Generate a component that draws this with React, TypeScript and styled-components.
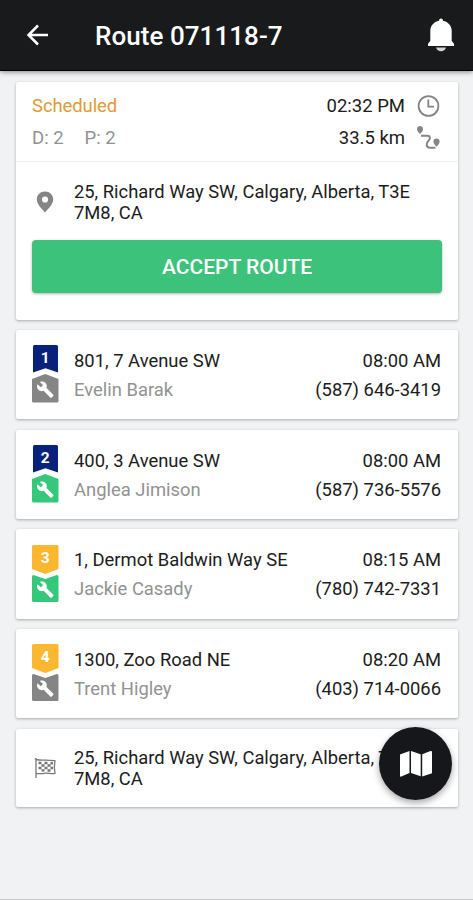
import React from "react";
import styled, { createGlobalStyle } from "styled-components";

const GlobalStyle = createGlobalStyle`
  * { box-sizing: border-box; }
  body {
    margin: 0;
    background: #f1f2f4;
    font-family: Roboto, "Liberation Sans", sans-serif;
    color: #1c1c1c;
  }
`;

const Screen = styled.div`
  display: flex;
  flex-direction: column;
  width: 473px;
  height: 900px;
  background: #f1f2f4;
  border-bottom: 1px solid #c9cacc;
  overflow: hidden;
`;

const Header = styled.header`
  display: flex;
  align-items: center;
  flex: none;
  height: 71px;
  padding: 0 18px 0 26px;
  background: #191a1c;
  border-bottom: 1px solid #000;
  box-shadow: 0 1px 5px rgba(0, 0, 0, 0.45);
  color: #fff;
`;

const Title = styled.h1`
  flex: 1;
  margin: 2px 0 0 46px;
  font-size: 26px;
  font-weight: 500;
  letter-spacing: 0.05px;
  line-height: 32px;
`;

const List = styled.main`
  display: flex;
  flex-direction: column;
  gap: 10.5px;
  padding: 11px 15px 0 16px;
`;

const Card = styled.section`
  background: #fff;
  border-radius: 2px;
  box-shadow: 0 1px 3px rgba(0, 0, 0, 0.3);
`;

const Summary = styled.div`
  display: flex;
  flex-direction: column;
  height: 80px;
  padding: 8px 16px 0;
  border-bottom: 1px solid #f0f0f0;
`;

const SummaryRow = styled.div`
  display: flex;
  align-items: center;
  height: 32px;
  font-size: 18.5px;
`;

const Status = styled.span`
  flex: 1;
  color: #e09a35;
  letter-spacing: -0.1px;
`;

const Counts = styled.span`
  display: flex;
  flex: 1;
  gap: 21px;
  color: #929292;
`;

const SummaryIcon = styled.span`
  display: flex;
  width: 26px;
  margin-left: 11px;
`;

const AddressRow = styled.div<{ $top: number }>`
  display: flex;
  align-items: center;
  padding: ${(p) => p.$top}px 16px 0;
`;

const AddressIcon = styled.span`
  display: flex;
  justify-content: center;
  width: 26px;
  margin-right: 16px;
`;

const Address = styled.p`
  flex: 1;
  margin: 0;
  font-size: 18.35px;
  line-height: 21.2px;
  white-space: nowrap;
`;

const AcceptButton = styled.button`
  display: block;
  width: 410px;
  height: 53px;
  margin: 16.6px 16px 26.5px;
  padding: 1px 0 0;
  border: 0;
  border-radius: 4px;
  background: #3cc27b;
  box-shadow: 0 1px 3px rgba(0, 0, 0, 0.3);
  color: #fff;
  font: 500 21px Roboto, "Liberation Sans", sans-serif;
`;

const StopCard = styled(Card)`
  display: flex;
  height: 89.2px;
  padding: 16px 17px 0 16px;
`;

const StopBadge = styled.span`
  display: flex;
  flex: none;
  width: 27px;
  margin: -0.8px 15px 0 0;
`;

const StopText = styled.div<{ $end?: boolean }>`
  display: flex;
  flex: ${(p) => (p.$end ? "none" : 1)};
  flex-direction: column;
  align-items: ${(p) => (p.$end ? "flex-end" : "flex-start")};
  font-size: 18.4px;
  line-height: 29px;
  white-space: nowrap;
`;

const Muted = styled.span`
  color: #929292;
`;

const FinishCard = styled(Card)`
  height: 78px;
`;

const MapButton = styled.button`
  position: absolute;
  left: 379px;
  top: 727px;
  display: flex;
  align-items: center;
  justify-content: center;
  width: 73px;
  height: 73px;
  padding: 0;
  border: 0;
  border-radius: 50%;
  background: #15171a;
  box-shadow: 0 3px 7px rgba(0, 0, 0, 0.35);
`;

const BackIcon = () => (
  <svg width="23" height="22" viewBox="0 0 23 22" fill="none" stroke="#fff" strokeWidth="2.5">
    <path d="M22 11H2.5M12 1.5L2.5 11l9.5 9.5" />
  </svg>
);

const BellIcon = () => (
  <svg width="28" height="36" viewBox="0 0 28 36" fill="#fff">
    <path d="M14 1.5c1.2 0 1.9.9 1.9 2.2C21.5 4.700 24.700 9 24.700 14v10l2.300 2.800v2.200H1v-2.200L3.300 24V14c0-5 3.200-9.300 8.800-10.300 0-1.300.7-2.200 1.900-2.200z" />
    <path d="M9 30.500h10c-.6 2.200-2.500 3.700-5 3.700s-4.400-1.500-5-3.700z" fill="#d4d4d4" />
  </svg>
);

const ClockIcon = () => (
  <svg width="24" height="24" viewBox="0 0 24 24" fill="none" stroke="#858585" strokeWidth="1.800">
    <circle cx="12.500" cy="12" r="9.900" />
    <path d="M12.300 5.500V12.700H18" />
  </svg>
);

const PathIcon = () => (
  <svg width="26" height="26" viewBox="0 0 26 26" fill="#858585">
    <path d="M4 1C2.200 1 1 2.300 1 4c0 2 1.500 3.400 3 5 1.500-1.600 3-3 3-5 0-1.700-1.200-3-3-3z" />
    <path d="M20.500 13.500c-1.900 0-3.100 1.300-3.100 3.100 0 2.100 1.600 3.600 3.100 5.200 1.600-1.600 3.100-3.100 3.100-5.200 0-1.800-1.200-3.100-3.100-3.100z" />
    <path
      d="M5 10.800h6.200c3.200 0 3.600 2.700 1.500 4.600-3.100 2.700-2.700 7.300 1.300 7.300h5.500"
      fill="none"
      stroke="#858585"
      strokeWidth="2"
    />
  </svg>
);

const PinIcon = () => (
  <svg width="18" height="22" viewBox="0 0 18 22" fill="#858585">
    <path
      fillRule="evenodd"
      d="M9 .5C4.300.5.8 4 .8 8.500c0 5 5 9.300 8.200 13 3.200-3.700 8.200-8 8.200-13C17.200 4 13.700.5 9 .5zm0 4.900a3.100 3.100 0 1 1 0 6.200 3.100 3.100 0 0 1 0-6.200z"
    />
  </svg>
);

const FlagIcon = () => (
  <svg width="22" height="22" viewBox="0 0 22 22" fill="none" stroke="#777" strokeWidth="1.300">
    <path d="M2 1v20M.7 1.800h1.600M2.300 2.500c3 .8 5.500.8 8.500.6 3-.2 6 .2 10.200.7l-.7 6.500.7 6c-3.500 1.200-6.500-.6-9.500-.1-3.200.6-6 .8-9.200.1" />
    <g fill="#777" stroke="none">
      <path d="M4.500 4.800h3v2.500h-3zM10.500 4.800h3v2.500h-3zM16.500 5h2.500v2.500h-2.500zM7.500 7.300h3v2.500h-3zM13.500 7.300h3v2.500h-3zM4.500 9.800h3v2.500h-3zM10.500 9.800h3v2.500h-3zM16.500 9.800h2.500v2.500h-2.500zM7.500 12.300h3v2.300h-3zM13.500 12.300h3v2.500h-3z" />
    </g>
  </svg>
);

const MapIcon = () => (
  <svg width="34" height="28" viewBox="0 0 34 28" fill="#fff">
    <path d="M1 4.600L10.500 1v22L2.300 26.600Q1 27 1 25.700z" />
    <path d="M12 1l9.700 3.200v22L12 23z" />
    <path d="M23.200 4.200L31.500 1Q33 .6 33 2v21.300l-9.800 3.300z" />
  </svg>
);

const BadgeNumber = styled.text`
  font: 700 15.5px Roboto, "Liberation Sans", sans-serif;
  fill: #fff;
  text-anchor: middle;
`;

type Stop = {
  number: number;
  address: string;
  name: string;
  time: string;
  phone: string;
  pickup: boolean;
  done: boolean;
};

/* Pickups have a notched tab above a peaked one; deliveries the reverse. */
const BadgeIcon = ({ number, pickup, done }: Pick<Stop, "number" | "pickup" | "done">) => (
  <svg width="27" height="58" viewBox="0 0 27 58">
    <path
      fill={pickup ? "#08217a" : "#fbb72f"}
      d={
        pickup
          ? "M2.500 0h22q1.500 0 1.500 1.500V27.500L13.500 23.200 1 27.500V1.500Q1 0 2.500 0z"
          : "M1.500 0h23.500q1.500 0 1.500 1.500V24L13.300 29 0 24V1.500Q0 0 1.500 0z"
      }
    />
    <path
      fill={done ? "#35c77a" : "#858585"}
      d={
        pickup
          ? "M13.300 29L26.500 34V56q0 1.500-1.500 1.500H1.500Q0 57.500 0 56V34z"
          : "M1.500 30L13.300 34 25 30q1.500 0 1.500 1.500V55.500q0 1.500-1.500 1.500H1.500Q0 57 0 55.500V31.500Q0 30 1.500 30z"
      }
    />
    <BadgeNumber x="13.300" y="18">{number}</BadgeNumber>
    <g transform="translate(4.300 35.600) scale(.75)" fill="#fff">
      <path d="M22.700 19l-9.100-9.100c.9-2.300.4-5-1.500-6.900-2-2-5-2.400-7.400-1.300L9 6 6 9 1.600 4.700C.4 7.100.9 10.100 2.900 12.100c1.900 1.900 4.600 2.400 6.900 1.500l9.100 9.100c.4.400 1 .4 1.400 0l2.300-2.300c.5-.4.500-1.100.1-1.400z" />
    </g>
  </svg>
);

const stops: Stop[] = [
  { number: 1, address: "801, 7 Avenue SW", name: "Evelin Barak", time: "08:00 AM", phone: "(587) 646-3419", pickup: true, done: false },
  { number: 2, address: "400, 3 Avenue SW", name: "Anglea Jimison", time: "08:00 AM", phone: "(587) 736-5576", pickup: true, done: true },
  { number: 3, address: "1, Dermot Baldwin Way SE", name: "Jackie Casady", time: "08:15 AM", phone: "(780) 742-7331", pickup: false, done: true },
  { number: 4, address: "1300, Zoo Road NE", name: "Trent Higley", time: "08:20 AM", phone: "(403) 714-0066", pickup: false, done: false },
];

const DepotAddress = () => (
  <Address>
    25, Richard Way SW, Calgary, Alberta, T3E
    <br />
    7M8, CA
  </Address>
);

export default function App() {
  return (
    <Screen>
      <GlobalStyle />
      <Header>
        <BackIcon />
        <Title>Route 071118-7</Title>
        <BellIcon />
      </Header>
      <List>
        <Card>
          <Summary>
            <SummaryRow>
              <Status>Scheduled</Status>
              <span>02:32 PM</span>
              <SummaryIcon><ClockIcon /></SummaryIcon>
            </SummaryRow>
            <SummaryRow>
              <Counts>
                <span>D: 2</span>
                <span>P: 2</span>
              </Counts>
              <span>33.5 km</span>
              <SummaryIcon><PathIcon /></SummaryIcon>
            </SummaryRow>
          </Summary>
          <AddressRow $top={19}>
            <AddressIcon><PinIcon /></AddressIcon>
            <DepotAddress />
          </AddressRow>
          <AcceptButton>ACCEPT ROUTE</AcceptButton>
        </Card>
        {stops.map((stop) => (
          <StopCard key={stop.number}>
            <StopBadge>
              <BadgeIcon number={stop.number} pickup={stop.pickup} done={stop.done} />
            </StopBadge>
            <StopText>
              <span>{stop.address}</span>
              <Muted>{stop.name}</Muted>
            </StopText>
            <StopText $end>
              <span>{stop.time}</span>
              <span>{stop.phone}</span>
            </StopText>
          </StopCard>
        ))}
        <FinishCard>
          <AddressRow $top={18}>
            <AddressIcon><FlagIcon /></AddressIcon>
            <DepotAddress />
          </AddressRow>
        </FinishCard>
      </List>
      <MapButton aria-label="Show map">
        <MapIcon />
      </MapButton>
    </Screen>
  );
}
